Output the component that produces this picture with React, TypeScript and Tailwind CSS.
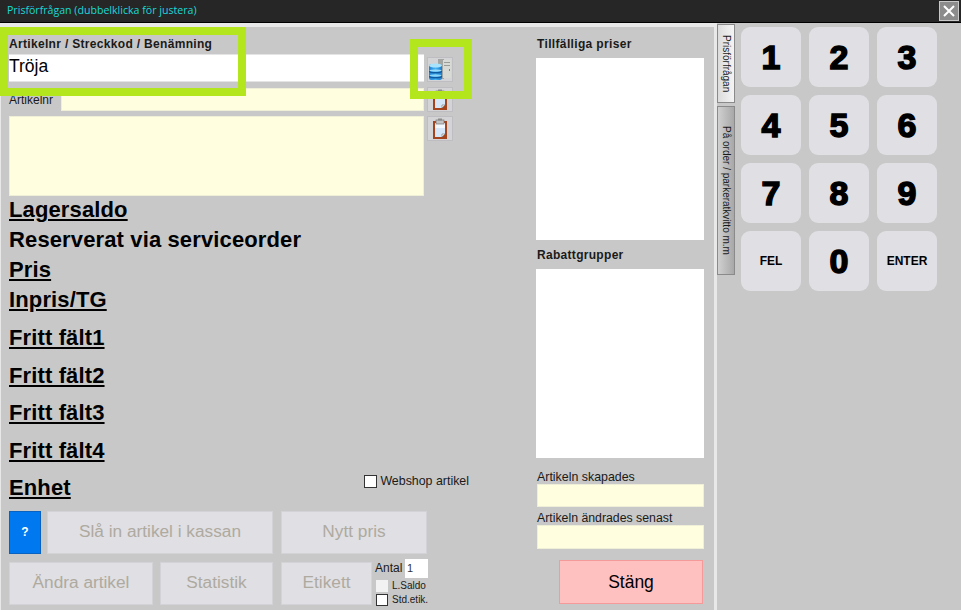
const FONT = "font-['Liberation_Sans',Arial,sans-serif]";

function DbIcon() {
  return (
    <svg width="24" height="23" viewBox="0 0 24 23">
      <defs>
        <linearGradient id="cyl" x1="0" x2="1" y1="0" y2="0">
          <stop offset="0" stopColor="#1c7fd6" />
          <stop offset="0.5" stopColor="#49b6f2" />
          <stop offset="1" stopColor="#1a78cc" />
        </linearGradient>
      </defs>
      <rect x="10" y="1" width="6" height="20" fill="#a3a5a2" />
      <rect x="15" y="2" width="8" height="18" fill="#d8dad6" />
      <rect x="16" y="4" width="6" height="1" fill="#9a9c99" />
      <rect x="16" y="7" width="6" height="1" fill="#9a9c99" />
      <rect x="21" y="11" width="1" height="2" fill="#3fae5a" />
      <rect x="1" y="6" width="13" height="16" rx="2.5" fill="url(#cyl)" />
      <ellipse cx="7.5" cy="7.5" rx="6.5" ry="2" fill="#a9e3fb" />
      <path d="M1 12.5c2 2 11 2 13 0v1.5c-2 2-11 2-13 0z" fill="#0e5aa0" />
      <ellipse cx="7.5" cy="12.5" rx="6" ry="1" fill="#9bdcf8" />
      <path d="M1 17.5c2 2 11 2 13 0v1.5c-2 2-11 2-13 0z" fill="#0e5aa0" />
      <ellipse cx="7.5" cy="17.5" rx="6" ry="1" fill="#8ed4f6" />
    </svg>
  );
}

function ClipIcon() {
  return (
    <svg width="24" height="23" viewBox="0 0 24 23">
      <rect x="5" y="4" width="14" height="18" fill="#a5431d" />
      <path d="M7 6h10v11l-3 3H7z" fill="#d5e6f8" />
      <path d="M7 6h10v5H7z" fill="#f3f8fd" />
      <path d="M14 20l3-3h-3z" fill="#ffffff" stroke="#555" strokeWidth="0.5" />
      <rect x="8" y="3" width="8" height="4" fill="#c4c4c4" stroke="#777" strokeWidth="0.7" />
      <rect x="10" y="1.5" width="4" height="2" fill="#8b8b8b" />
    </svg>
  );
}

function IconButton({ children }: { children: React.ReactNode }) {
  return (
    <div className="w-[26px] h-[25px] bg-[#d4d4d6] border border-[#bdbdc2] flex items-center justify-center shrink-0">
      {children}
    </div>
  );
}

function Heading({ text, className = "" }: { text: string; className?: string }) {
  return (
    <div className={`h-[30px] flex items-center text-[22px] leading-[26px] font-bold tracking-[0.13px] text-black ${className}`}>
      {text}
    </div>
  );
}

function GreyBtn({ text, className }: { text: string; className: string }) {
  return (
    <div className={`h-[43px] bg-[#e0dfe3] border border-[#d3d2d6] flex items-center justify-center text-[17.25px] text-[#aeaaa0] ${className}`}>
      {text}
    </div>
  );
}

function Key({ text, small }: { text: string; small?: boolean }) {
  return (
    <div
      className={`w-[60px] h-[60px] rounded-[9px] bg-[#e0dfe3] flex items-center justify-center text-black ${
        small
          ? "text-[12px] font-bold"
          : "text-[34px] font-bold [-webkit-text-stroke:1.5px_black]"
      }`}
    >
      {text}
    </div>
  );
}

export default function App() {
  return (
    <div className={`relative w-[961px] h-[610px] overflow-hidden bg-[#c8c8c8] flex flex-col ${FONT}`}>
      <div className="h-[23px] shrink-0 bg-[#262626] border-b border-black flex items-center justify-between pl-[7px] pr-[2px]">
        <span className="text-[10.6px] text-[#19d9d9] font-['Open_Sans',sans-serif]">Prisförfrågan (dubbelklicka för justera)</span>
        <div className="w-[20px] h-[20px] bg-[#8c8c8c] border border-[#c8c8c8] flex items-center justify-center">
          <svg width="14" height="14" viewBox="0 0 14 14">
            <path d="M2 2l10 10M12 2L2 12" stroke="#fff" strokeWidth="2" />
          </svg>
        </div>
      </div>

      <div className="flex-1 flex min-h-0">
        <div className="w-[717px] shrink-0 border-l border-t-[4px] border-r-[3px] border-[#e8e8e8] flex pl-[8px] pt-[8px]">
          <div className="w-[419px] shrink-0 relative">
            <div className="h-[18px] text-[12px] leading-[18px] font-bold text-[#1a1a1a] tracking-[0.32px] whitespace-nowrap">
              Artikelnr / Streckkod / Benämning
            </div>
            <div className="flex gap-[3px] mt-[1px] w-[445px]">
              <div className="w-[415px] h-[28px] bg-white border-y border-[#e4e4e4] text-[17.5px] leading-[22px] text-black">
                Tröja
              </div>
              <div className="mt-[3px]">
                <IconButton><DbIcon /></IconButton>
              </div>
            </div>
            <div className="flex mt-[5px] w-[445px] gap-[3px]">
              <div className="w-[415px] flex items-center">
                <span className="w-[52px] text-[12px] text-[#1a1a1a]">Artikelnr</span>
                <div className="flex-1 h-[23px] bg-[#ffffe0] border border-[#efefd8]" />
              </div>
              <IconButton><ClipIcon /></IconButton>
            </div>
            <div className="flex mt-[4px] w-[445px] gap-[3px]">
              <div className="w-[415px] h-[80px] bg-[#ffffe0] border border-[#efefd8]" />
              <IconButton><ClipIcon /></IconButton>
            </div>
            <Heading text="Lagersaldo" className="underline mt-[-1px]" />
            <Heading text="Reserverat via serviceorder" />
            <Heading text="Pris" className="underline" />
            <Heading text="Inpris/TG" className="underline" />
            <div className="flex flex-col gap-[7.5px] mt-[8px]">
              <Heading text="Fritt fält1" className="underline" />
              <Heading text="Fritt fält2" className="underline" />
              <Heading text="Fritt fält3" className="underline" />
              <Heading text="Fritt fält4" className="underline" />
            </div>
            <div className="flex justify-between mt-[7px] w-[460px]">
              <Heading text="Enhet" className="underline" />
              <div className="flex items-center gap-[2px] h-[14px] mt-[2px] text-[12.4px] text-[#1a1a1a]">
                <span className="w-[13px] h-[13px] bg-white border border-[#333] mr-[1px]" />
                Webshop artikel
              </div>
            </div>
            <div className="flex mt-[8px] w-[420px]">
              <div className="w-[32px] h-[43px] bg-[#0078f0] border border-[#0a62c0] flex items-center justify-center text-white font-bold text-[12px]">?</div>
              <GreyBtn text="Slå in artikel i kassan" className="w-[226px] ml-[6px]" />
              <GreyBtn text="Nytt pris" className="w-[146px] ml-[8px]" />
            </div>
            <div className="flex mt-[8px] w-[420px]">
              <GreyBtn text="Ändra artikel" className="w-[144px]" />
              <GreyBtn text="Statistik" className="w-[113px] ml-[7px]" />
              <GreyBtn text="Etikett" className="w-[91px] ml-[8px]" />
              <div className="w-[54px] ml-[3px] -mt-[3px] text-[#1a1a1a]">
                <div className="flex items-center h-[19px] text-[12px]">
                  <span className="w-[30px]">Antal</span>
                  <div className="w-[23px] h-[19px] bg-white text-[11px] pl-[2px] leading-[19px] text-[#333]">1</div>
                </div>
                <div className="flex items-center h-[14px] mt-[1px] pl-[1px] text-[10px]">
                  <span className="w-[12px] h-[12px] bg-[#f2f2f2] mr-[4px]" />L.Saldo
                </div>
                <div className="flex items-center h-[14px] pl-[1px] text-[10px] whitespace-nowrap">
                  <span className="w-[12px] h-[12px] bg-white border border-[#333] mr-[4px]" />Std.etik.
                </div>
              </div>
            </div>
          </div>

          <div className="w-[168px] shrink-0 ml-[108px] flex flex-col">
            <div className="h-[18px] text-[12px] leading-[18px] font-bold tracking-[0.35px] text-[#1a1a1a] pl-[1px]">Tillfälliga priser</div>
            <div className="w-[168px] h-[182px] mt-[5px] bg-white" />
            <div className="h-[18px] mt-[6px] text-[12px] leading-[18px] font-bold tracking-[0.3px] text-[#1a1a1a] pl-[1px]">Rabattgrupper</div>
            <div className="w-[168px] h-[189px] mt-[5px] bg-white" />
            <div className="h-[15px] mt-[11px] text-[12.4px] leading-[16px] text-[#1a1a1a] pl-[1px]">Artikeln skapades</div>
            <div className="ml-[1px] w-[167px] h-[23px] bg-[#ffffe0] border border-[#efefd8]" />
            <div className="h-[15px] mt-[3px] text-[12.3px] leading-[16px] text-[#1a1a1a] pl-[1px] whitespace-nowrap">Artikeln ändrades senast</div>
            <div className="ml-[1px] w-[167px] h-[24px] bg-[#ffffe0] border border-[#efefd8]" />
            <div className="ml-[23px] mt-[11px] w-[144px] h-[44px] bg-[#ffc0c0] border border-[#f59a9a] flex items-center justify-center text-[17.5px] text-black">
              Stäng
            </div>
          </div>
        </div>

        <div className="w-[18px] shrink-0 flex flex-col text-[10px] text-[#1a1a1a]">
          <div className="h-[79px] mt-[1px] bg-gradient-to-r from-[#dcdcdc] to-[#f4f4f4] border border-[#8a8a8a] flex items-center justify-center [writing-mode:vertical-rl] whitespace-nowrap">
            Prisförfrågan
          </div>
          <div className="h-[169px] mt-[3px] bg-gradient-to-r from-[#d0d0d0] to-[#a8a8a8] border border-[#8a8a8a] flex items-center justify-center [writing-mode:vertical-rl] whitespace-nowrap">
            På order / parkeratkvitto m.m
          </div>
        </div>

        <div className="ml-[6px] pt-[4px] grid grid-cols-[60px_60px_60px] auto-rows-[60px] gap-x-[8px] gap-y-[8px] content-start">
          {["1", "2", "3", "4", "5", "6", "7", "8", "9"].map((k) => (
            <Key key={k} text={k} />
          ))}
          <Key text="FEL" small />
          <Key text="0" />
          <Key text="ENTER" small />
        </div>
      </div>

      <div className="absolute left-0 top-[27px] w-[246px] h-[69px] border-[8px] border-[#b4e61e]" />
      <div className="absolute left-[410px] top-[39px] w-[62px] h-[60px] border-[8px] border-[#b4e61e]" />
    </div>
  );
}
